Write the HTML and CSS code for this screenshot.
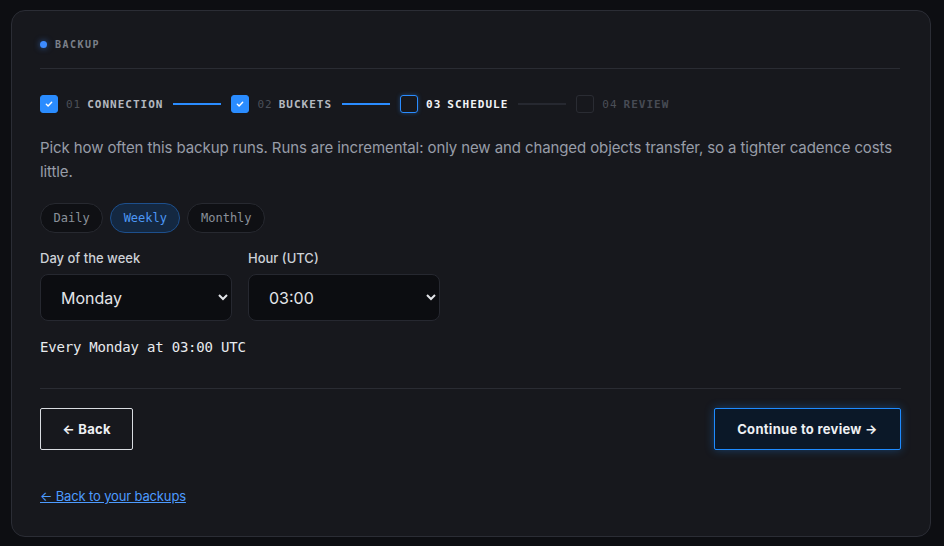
FILE: index.html
```html
<!DOCTYPE html>
<html lang="en">
<head>
    <meta charset="UTF-8">
    <meta name="viewport" content="width=device-width, initial-scale=1.0">
    <title>Backup schedule</title>
    <link rel="stylesheet" href="styles.css">
</head>
<body>
    <div class="wizard-card">
        <div class="wizard-header">
            <span class="header-dot"></span>
            <span class="header-label">Backup</span>
        </div>

        <div class="stepper">
            <div class="step done">
                <span class="step-box">
                    <svg viewBox="0 0 18 18" width="18" height="18"><path d="M6 9.3l2 1.9 4-4.2" fill="none" stroke="#fff" stroke-width="1.6" stroke-linecap="round" stroke-linejoin="round"/></svg>
                </span>
                <span class="step-num">01</span>
                <span class="step-name">Connection</span>
            </div>
            <span class="step-line active"></span>
            <div class="step done">
                <span class="step-box">
                    <svg viewBox="0 0 18 18" width="18" height="18"><path d="M6 9.3l2 1.9 4-4.2" fill="none" stroke="#fff" stroke-width="1.6" stroke-linecap="round" stroke-linejoin="round"/></svg>
                </span>
                <span class="step-num">02</span>
                <span class="step-name">Buckets</span>
            </div>
            <span class="step-line active"></span>
            <div class="step current">
                <span class="step-box"></span>
                <span class="step-num">03</span>
                <span class="step-name">Schedule</span>
            </div>
            <span class="step-line"></span>
            <div class="step todo">
                <span class="step-box"></span>
                <span class="step-num">04</span>
                <span class="step-name">Review</span>
            </div>
        </div>

        <p class="intro">Pick how often this backup runs. Runs are incremental: only new and changed objects transfer, so a tighter cadence costs little.</p>

        <div class="cadence">
            <button class="pill">Daily</button>
            <button class="pill active">Weekly</button>
            <button class="pill">Monthly</button>
        </div>

        <div class="fields">
            <label class="field">
                <span class="field-label">Day of the week</span>
                <select class="field-select">
                    <option selected>Monday</option>
                    <option>Tuesday</option>
                    <option>Wednesday</option>
                    <option>Thursday</option>
                    <option>Friday</option>
                    <option>Saturday</option>
                    <option>Sunday</option>
                </select>
            </label>
            <label class="field">
                <span class="field-label">Hour (UTC)</span>
                <select class="field-select">
                    <option>00:00</option>
                    <option selected>03:00</option>
                    <option>06:00</option>
                    <option>12:00</option>
                </select>
            </label>
        </div>

        <p class="summary">Every Monday at 03:00 UTC</p>

        <div class="wizard-footer">
            <button class="btn btn-ghost">← Back</button>
            <button class="btn btn-primary">Continue to review →</button>
        </div>

        <a class="back-link" href="#">← Back to your backups</a>
    </div>
</body>
</html>
```

FILE: styles.css
```css
* {
    box-sizing: border-box;
}

body {
    margin: 0;
    padding: 10px 13px 9px 11px;
    background: #0d0e12;
    font-family: Inter, "Noto Sans", sans-serif;
    color: #e5e7eb;
}

.wizard-card {
    background: #17181d;
    border: 1px solid #2b2d35;
    border-radius: 14px;
    padding: 25px 30px 28px 28px;
    height: 527px;
}

.wizard-header {
    display: flex;
    align-items: center;
    gap: 8px;
    height: 16px;
    padding-bottom: 16px;
    border-bottom: 1px solid #2a2c33;
    box-sizing: content-box;
}

.header-dot {
    width: 7px;
    height: 7px;
    border-radius: 50%;
    background: #3d8bff;
    box-shadow: 0 0 6px rgba(61, 139, 255, 0.6);
}

.header-label {
    font-family: "DejaVu Sans Mono", monospace;
    font-size: 10px;
    letter-spacing: 1.5px;
    text-transform: uppercase;
    color: #7b808a;
    font-weight: bold;
}

.stepper {
    display: flex;
    align-items: center;
    margin-top: 26px;
    height: 18px;
}

.step {
    display: flex;
    align-items: center;
    font-family: "DejaVu Sans Mono", monospace;
    font-size: 11px;
    letter-spacing: 1px;
    text-transform: uppercase;
}

.step-box {
    width: 18px;
    height: 18px;
    border-radius: 3px;
    border: 1px solid #2a2c33;
    display: flex;
    align-items: center;
    justify-content: center;
    margin-right: 8px;
}

.step.done .step-box {
    background: #2a8cff;
    border-color: #2a8cff;
}

.step.current .step-box {
    border-color: #2a8cff;
    box-shadow: 0 0 4px rgba(42, 140, 255, 0.4);
}

.step-num {
    color: #4b4f58;
    margin-right: 6px;
}

.step-name {
    color: #b4b8c0;
    font-weight: bold;
}

.step.current .step-num,
.step.current .step-name {
    color: #f1f3f6;
    font-weight: bold;
}

.step.todo .step-name {
    color: #474b54;
}

.step-line {
    width: 48px;
    height: 2px;
    margin: 0 10px;
    background: #262830;
}

.step-line.active {
    background: #2a8cff;
}

.intro {
    margin: 23px 0 0;
    font-size: 15px;
    letter-spacing: -0.1px;
    line-height: 24px;
    color: #979da8;
}

.cadence {
    display: flex;
    gap: 7px;
    margin-top: 19px;
}

.pill {
    height: 30px;
    padding: 0 12.5px;
    border-radius: 15px;
    border: 1px solid #272930;
    background: #0f1014;
    color: #8a909a;
    font-family: "DejaVu Sans Mono", monospace;
    font-size: 12px;
    cursor: pointer;
}

.pill.active {
    background: #142841;
    border-color: #1d4f8c;
    color: #4c97f5;
}

.fields {
    display: flex;
    gap: 16px;
    margin-top: 17px;
}

.field {
    display: flex;
    flex-direction: column;
    gap: 8px;
    width: 192px;
}

.field-label {
    font-size: 13px;
    font-weight: 500;
    line-height: 16px;
    color: #cdd1d7;
}

.field-select {
    height: 47px;
    padding: 0 8px 0 16px;
    border-radius: 8px;
    border: 1px solid #262830;
    background: #0c0d11;
    color: #e3e5e9;
    font-family: Inter, "Noto Sans", sans-serif;
    font-size: 16px;
    color-scheme: dark;
}

.summary {
    margin: 18px 0 0;
    font-family: "DejaVu Sans Mono", monospace;
    font-size: 14px;
    letter-spacing: -0.2px;
    line-height: 16px;
    color: #e8eaee;
}

.wizard-footer {
    display: flex;
    justify-content: space-between;
    margin-top: 33px;
    margin-right: -1px;
    padding-top: 19px;
    border-top: 1px solid #2a2c33;
}

.btn {
    height: 42px;
    padding: 0 20px;
    border-radius: 2px;
    font-family: Inter, "Noto Sans", sans-serif;
    font-size: 13px;
    font-weight: 700;
    letter-spacing: 0.3px;
    color: #eef0f3;
    cursor: pointer;
}

.btn-ghost {
    background: transparent;
    border: 1px solid #d9dce1;
    width: 93px;
}

.btn-primary {
    background: #0b1828;
    border: 1px solid #1e8bff;
    width: 187px;
    box-shadow: 0 0 10px rgba(30, 139, 255, 0.35);
}

.back-link {
    display: inline-block;
    margin-top: 38px;
    font-size: 13px;
    letter-spacing: -0.15px;
    line-height: 16px;
    color: #4d9bff;
}
```
